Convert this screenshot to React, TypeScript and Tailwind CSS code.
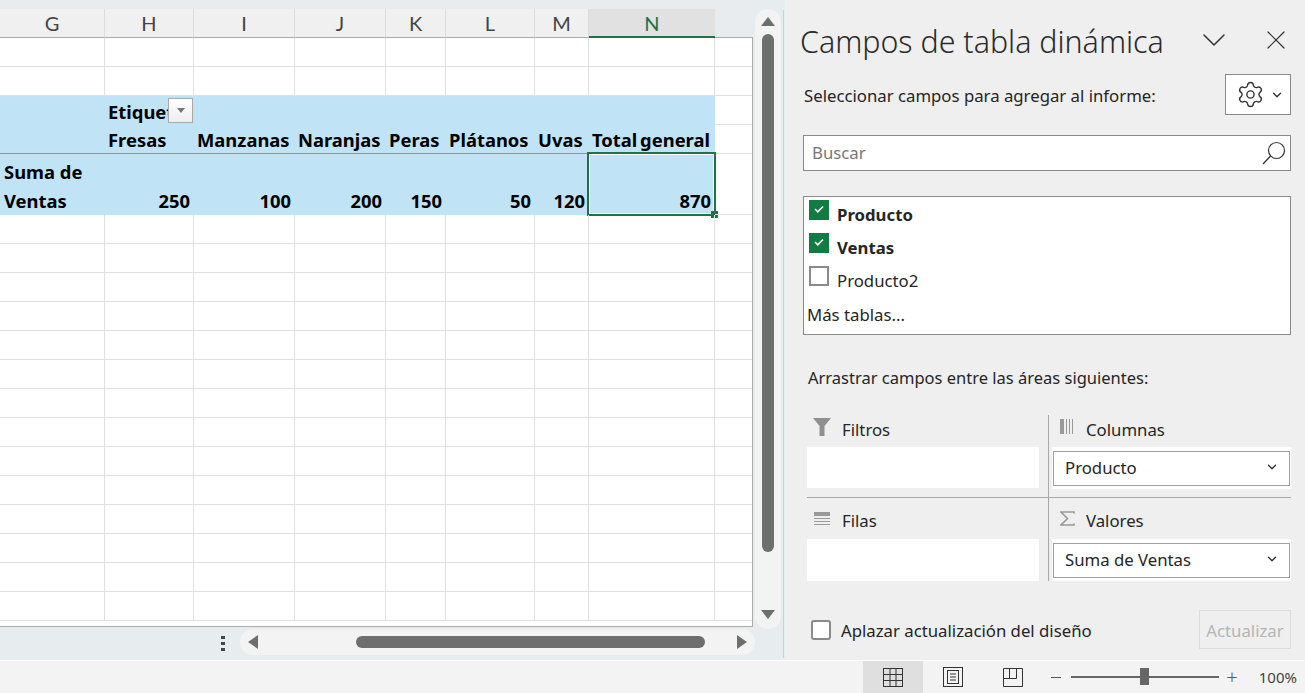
import { ChevronDown, Settings, X } from "lucide-react";

const colTemplate = "grid grid-cols-[105px_89px_101px_91px_60px_89px_54px_126px_37px]";
const columns = ["G", "H", "I", "J", "K", "L", "M", "N"];
const sheetFont = "font-['Noto_Sans',sans-serif] font-bold text-[18.4px] text-black";

function Cell({ className = "", children }: { className?: string; children?: React.ReactNode }) {
  return <div className={"relative border-r border-b border-[#e0e0e0] " + className}>{children}</div>;
}

function EmptyRow() {
  return (
    <div className={colTemplate + " h-[29px]"}>
      {Array.from({ length: 9 }).map((_, i) => (
        <Cell key={i} className={i === 8 ? "border-r-0" : ""} />
      ))}
    </div>
  );
}

function ColumnHeader() {
  return (
    <div className={colTemplate + " h-[29px]"}>
      {columns.map((c) => (
        <div
          key={c}
          className={
            c === "N"
              ? "h-[29px] flex items-center justify-center bg-[#e1e1e1] border-b-2 border-[#1f7246] text-[#1f7246] text-[20px] leading-none font-['Lato',sans-serif]"
              : "h-[29px] flex items-center justify-center bg-[#f0f0f0] border-r border-b border-r-[#dcdcdc] border-b-[#ababab] text-[#444444] text-[20px] leading-none font-['Lato',sans-serif]"
          }
        >
          {c}
        </div>
      ))}
      <div className="h-[29px] border-b border-[#ababab] w-[38px]" />
    </div>
  );
}

function PivotTable() {
  const heads = ["Fresas", "Manzanas", "Naranjas", "Peras", "Plátanos", "Uvas", "Total general"];
  const values = ["250", "100", "200", "150", "50", "120", "870"];
  return (
    <div className={colTemplate + " " + sheetFont}>
      <div className="col-span-8 h-[29px] bg-[#c0e4f5] relative pl-[108px] leading-[31px]">
        <div className="w-[60px] h-[29px] overflow-hidden whitespace-nowrap">Etiquetas</div>
        <button className="absolute left-[168px] top-[2px] w-[25px] h-[25px] border border-[#a9a9a9] bg-gradient-to-b from-white to-[#eeeef0] flex items-center justify-center">
          <span className="w-0 h-0 border-l-[4px] border-r-[4px] border-t-[5px] border-l-transparent border-r-transparent border-t-[#767676]" />
        </button>
      </div>
      <Cell className="border-r-0 h-[29px]" />

      <div className="col-span-8 grid grid-cols-subgrid h-[29px] bg-[#c0e4f5] border-b border-[#5aa5d8] leading-[29px]">
        <div />
        {heads.map((h) => (
          <div key={h} className="whitespace-nowrap pl-[3px] [word-spacing:-2px]">
            {h}
          </div>
        ))}
      </div>
      <Cell className="border-r-0 h-[29px]" />

      <div className="col-span-8 grid grid-cols-subgrid h-[61px] bg-[#c0e4f5] leading-[29px]">
        <div className="pl-[4px] pt-[3px]">
          Suma de
          <br />
          Ventas
        </div>
        {values.map((v, i) => (
          <div key={v} className="relative flex items-end justify-end pr-[4px] leading-[29px]">
            {v}
            {i === 6 && (
              <div className="absolute -left-[2px] -top-[2px] right-[-1px] bottom-[-1px] border-2 border-[#1f7246] outline outline-1 -outline-offset-3 outline-white">
                <span className="absolute right-[-4px] bottom-[-4px] w-[7px] h-[7px] bg-[#1f7246]" />
              </div>
            )}
          </div>
        ))}
      </div>
      <Cell className="border-r-0 h-[61px]" />
    </div>
  );
}

function VerticalScrollbar() {
  return (
    <div className="mt-[9px] w-[26px] h-[620px] rounded-full bg-[#f3f3f3] flex flex-col items-center pt-[8px]">
      <span className="w-0 h-0 border-l-[7px] border-r-[7px] border-b-[9px] border-l-transparent border-r-transparent border-b-[#6e6e6e]" />
      <div className="mt-[8px] w-[12px] h-[518px] rounded-full bg-[#6e6e6e]" />
      <span className="mt-[58px] w-0 h-0 border-l-[7px] border-r-[7px] border-t-[9px] border-l-transparent border-r-transparent border-t-[#6e6e6e]" />
    </div>
  );
}

function HorizontalScrollbar() {
  return (
    <div className="h-[33px] flex items-start pl-[221px]">
      <div className="w-[3px] flex flex-col gap-[3px] mt-[9px] text-[0px]">
        <span className="w-[4px] h-[3px] bg-[#444444]" />
        <span className="w-[4px] h-[3px] bg-[#444444]" />
        <span className="w-[4px] h-[3px] bg-[#444444]" />
      </div>
      <div className="ml-[16px] mt-[2px] w-[515px] h-[26px] rounded-full bg-[#f3f3f3] flex items-center pl-[8px]">
        <span className="w-0 h-0 border-t-[7px] border-b-[7px] border-r-[10px] border-t-transparent border-b-transparent border-r-[#6e6e6e]" />
        <div className="ml-[98px] w-[349px] h-[12px] rounded-full bg-[#6e6e6e]" />
        <span className="ml-[32px] w-0 h-0 border-t-[7px] border-b-[7px] border-l-[10px] border-t-transparent border-b-transparent border-l-[#6e6e6e]" />
      </div>
    </div>
  );
}

function FieldRow({ label, checked }: { label: string; checked: boolean }) {
  return (
    <div className="flex items-start h-[33px]">
      {checked ? (
        <div className="w-[20px] h-[20px] bg-[#107c41] flex items-center justify-center">
          <svg width="12" height="10" viewBox="0 0 12 10" fill="none" stroke="white" strokeWidth="1.6" className="mb-[3px]">
            <path d="M2 5l2.8 2.8L10 2.5" />
          </svg>
        </div>
      ) : (
        <div className="w-[20px] h-[20px] bg-white border-2 border-[#8a8a8a]" />
      )}
      <span className={"ml-[8px] mt-[3px] leading-[24px] text-[#252525] " + (checked ? "font-bold" : "")}>{label}</span>
    </div>
  );
}

function AreaLabel({ icon, label, textLeft }: { icon: React.ReactNode; label: string; textLeft: string }) {
  return (
    <div className="h-[32px] relative flex items-center text-[#252525]">
      {icon}
      <span className={textLeft + " leading-[28px] pb-[2px]"}>{label}</span>
    </div>
  );
}

function Dropdown({ label }: { label: string }) {
  return (
    <div className="h-[42px] bg-white flex items-center px-[1px]">
      <div className="w-full h-[35px] border border-[#a0a0a0] flex items-center justify-between pl-[11px] pr-[10px] text-[#252525]">
        <span>{label}</span>
        <ChevronDown size={14} strokeWidth={2.4} className="text-[#333333] mb-[3px]" />
      </div>
    </div>
  );
}

function PivotPanel() {
  return (
    <div className="w-[520px] bg-[#efefef] font-['Noto_Sans',sans-serif] text-[16.75px] text-[#252525]">
      <div className="h-[74px] flex items-start pl-[15px] pt-[20px]">
        <h1 className="text-[30.35px] leading-[44px] font-light w-[394px] whitespace-nowrap text-[#2a2a2a]">Campos de tabla dinámica</h1>
        <ChevronDown size={40} strokeWidth={0.9} className="text-[#333333]" />
        <X size={32} strokeWidth={0.9} className="ml-[26px] mt-[4px] text-[#333333]" />
      </div>

      <div className="h-[41px] flex items-center justify-between pl-[19px] pr-[14px]">
        <span className="pt-[3px]">Seleccionar campos para agregar al informe:</span>
        <div className="w-[66px] h-[41px] border border-[#8a8a8a] bg-white flex items-center pl-[10px] gap-[5px]">
          <Settings size={29} strokeWidth={1.15} className="text-[#333333]" />
          <ChevronDown size={14} strokeWidth={2.4} className="text-[#333333]" />
        </div>
      </div>

      <div className="mt-[20px] ml-[18px] mr-[14px] h-[36px] border border-[#8a8a8a] bg-white flex items-center justify-between pl-[8px] pr-[3px]">
        <span className="text-[#777777]">Buscar</span>
        <svg width="26" height="26" viewBox="0 0 26 26" fill="none" stroke="#333333" strokeWidth="1.2">
          <circle cx="15.5" cy="10.5" r="8" />
          <path d="M9.5 16L2 24" />
        </svg>
      </div>

      <div className="mt-[25px] ml-[18px] mr-[14px] h-[139px] border border-[#8a8a8a] bg-white pl-[5px] pt-[3px]">
        <FieldRow label="Producto" checked />
        <FieldRow label="Ventas" checked />
        <FieldRow label="Producto2" checked={false} />
        <div className="-ml-[2px] leading-[24px] mt-[4px]">Más tablas...</div>
      </div>

      <div className="mt-[30px] ml-[23px] leading-[26px] text-[16.5px]">Arrastrar campos entre las áreas siguientes:</div>

      <div className="mt-[24px] ml-[22px] mr-[14px] h-[166px] grid grid-cols-[242px_242px] grid-rows-[83px_83px]">
        <div className="border-r border-b border-[#a8a8a8] pr-[9px]">
          <AreaLabel
            label="Filtros"
            textLeft="ml-[35px]"
            icon={
              <svg width="18" height="18" viewBox="0 0 18 18" className="absolute left-[6px] top-[3px]">
                <path d="M0 0h18l-6.5 8v10h-5V8z" fill="#8f8f8f" />
              </svg>
            }
          />
          <div className="h-[41px] bg-white" />
        </div>
        <div className="border-b border-[#a8a8a8] pl-[3px]">
          <AreaLabel
            label="Columnas"
            textLeft="ml-[34px]"
            icon={
              <svg width="15" height="15" viewBox="0 0 15 15" className="absolute left-[8px] top-[4px]">
                <rect x="0" y="0" width="4" height="15" fill="#9a9a9a" />
                <path d="M6.5 0v15M9.5 0v15M12.5 0v15" stroke="#9a9a9a" strokeWidth="1" />
              </svg>
            }
          />
          <Dropdown label="Producto" />
        </div>
        <div className="border-r border-[#a8a8a8] pr-[9px]">
          <div className="h-[41px] relative flex items-center">
            <svg width="16" height="14" viewBox="0 0 16 14" className="absolute left-[7px] top-[14px]">
              <rect x="0" y="0" width="16" height="4" fill="#9a9a9a" />
              <path d="M0 6.5h16M0 9.5h16M0 12.5h16" stroke="#9a9a9a" strokeWidth="1" />
            </svg>
            <span className="ml-[35px] leading-[28px] pt-[4px]">Filas</span>
          </div>
          <div className="h-[42px] bg-white" />
        </div>
        <div className="pl-[3px]">
          <div className="h-[41px] relative flex items-center">
            <svg width="15" height="15" viewBox="0 0 15 15" className="absolute left-[8px] top-[13px]">
              <path d="M14 2.5V1H1l6.5 6.5L1 14h13v-1.5" fill="none" stroke="#9a9a9a" strokeWidth="1.6" />
            </svg>
            <span className="ml-[34px] leading-[28px] pt-[4px]">Valores</span>
          </div>
          <Dropdown label="Suma de Ventas" />
        </div>
      </div>

      <div className="mt-[29px] ml-[26px] mr-[14px] flex items-center justify-between h-[39px]">
        <div className="flex items-center">
          <div className="w-[20px] h-[20px] rounded-[3px] bg-white border-2 border-[#8a8a8a]" />
          <span className="ml-[10px] pt-[2px]">Aplazar actualización del diseño</span>
        </div>
        <div className="w-[92px] h-[39px] border border-[#dddddd] flex items-center justify-center text-[#b5b5b5] pt-[3px]">Actualizar</div>
      </div>
    </div>
  );
}

function StatusBar() {
  return (
    <div className="h-[32px] bg-[#f3f3f3] flex items-center justify-end pr-[8px] font-['Noto_Sans',sans-serif] text-[#444444] text-[15px]">
      <div className="w-[60px] h-[32px] bg-[#dfdfdf] flex items-center justify-center">
        <svg width="20" height="19" viewBox="0 0 20 19" fill="none" stroke="#333333" strokeWidth="1">
          <rect x="0.5" y="0.5" width="19" height="18" />
          <path d="M7 0v19M13 0v19M0 6.5h20M0 12.5h20" />
        </svg>
      </div>
      <div className="w-[60px] flex items-center justify-center">
        <svg width="20" height="20" viewBox="0 0 20 20" fill="none" stroke="#333333" strokeWidth="1">
          <rect x="0.5" y="0.5" width="19" height="19" />
          <rect x="4.5" y="3.5" width="11" height="13" />
          <path d="M7 7h6M7 10h6M7 13h6" />
        </svg>
      </div>
      <div className="w-[60px] flex items-center justify-center">
        <svg width="20" height="19" viewBox="0 0 20 19" fill="none" stroke="#333333" strokeWidth="1">
          <path d="M0.5 0.5h19v18h-19zM6.5 0.5v10M13.5 0.5v10M0.5 10.5h13" />
        </svg>
      </div>
      <div className="ml-[8px] w-[10px] h-px bg-[#555555]" />
      <div className="ml-[10px] w-[148px] h-[2px] bg-[#666666] relative">
        <span className="absolute left-[69px] top-[-8px] w-[9px] h-[17px] bg-[#666666]" />
      </div>
      <span className="ml-[8px] text-[20px] font-light leading-none text-[#555555] w-[10px] flex justify-center">+</span>
      <span className="ml-[21px] w-[39px] text-right">100%</span>
    </div>
  );
}

export default function App() {
  return (
    <div className="w-[1305px] h-[693px] overflow-hidden flex flex-col bg-[#f3f3f3]">
      <div className="h-[660px] flex bg-[#e7ecef]">
        <div className="w-[755px] flex flex-col">
          <div className="h-[9px] bg-[#e9ecef]" />
          <div className="w-[753px] h-[618px] overflow-hidden bg-[#e9ecef]">
            <ColumnHeader />
            <div className="h-[589px] bg-white border-r border-b border-[#ababab] overflow-hidden">
              <EmptyRow />
              <EmptyRow />
              <PivotTable />
              {Array.from({ length: 14 }).map((_, i) => (
                <EmptyRow key={i} />
              ))}
            </div>
          </div>
          <HorizontalScrollbar />
        </div>
        <VerticalScrollbar />
        <div className="ml-[2px] w-[1px] h-[648px] mt-[10px] bg-[#cfcfcf]" />
        <div className="w-[1px]" />
        <PivotPanel />
      </div>
      <div className="h-px bg-white" />
      <StatusBar />
    </div>
  );
}
